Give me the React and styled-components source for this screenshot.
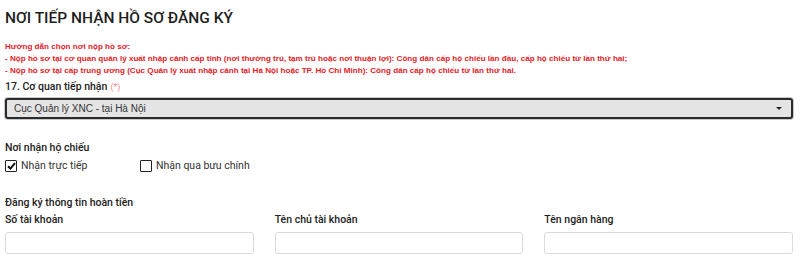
import React from 'react';
import styled, { createGlobalStyle } from 'styled-components';

const GlobalStyle = createGlobalStyle`
  body {
    margin: 0;
    background: #fff;
    font-family: Roboto, "Liberation Sans", Arial, sans-serif;
    color: #222;
  }
`;

const Page = styled.div`
  width: 788px;
  padding: 9px 5px 0 5px;
  display: flex;
  flex-direction: column;
`;

const Title = styled.h2`
  margin: 0;
  font-size: 15.5px;
  font-weight: 500;
  line-height: 18px;
  color: #1e1e1e;
`;

const Guide = styled.div`
  margin-top: 14px;
  font-family: "Liberation Sans", Arial, sans-serif;
  font-size: 8.1px;
  font-weight: 700;
  line-height: 12px;
  color: #e3201f;
`;

const FieldLabel = styled.div`
  margin-top: ${p => p.$top || 0}px;
  font-size: 10.5px;
  font-weight: 500;
  line-height: 13px;
  color: #222;
`;

const Required = styled.span`
  color: #f08a8a;
  font-weight: 400;
  font-size: 9px;
  margin-left: 3px;
`;

const Select = styled.div`
  margin-top: 4px;
  height: 17px;
  border: 2px solid #2b2b2b;
  border-radius: 3px;
  background: #e4e4e4;
  box-shadow: 0 0 0 1px #c8c8c8;
  display: flex;
  align-items: center;
  justify-content: space-between;
  padding: 0 9px 0 7px;
  font-family: "Liberation Sans", Arial, sans-serif;
  font-size: 10px;
  color: #333;
`;

const Caret = styled.span`
  width: 0;
  height: 0;
  border-left: 3px solid transparent;
  border-right: 3px solid transparent;
  border-top: 3px solid #222;
`;

const CheckRow = styled.div`
  margin-top: 5px;
  display: flex;
  align-items: center;
`;

const CheckItem = styled.label`
  width: ${p => p.$w}px;
  display: flex;
  align-items: center;
  gap: 4px;
  font-size: 10.5px;
  color: #333;
`;

const Box = styled.span`
  width: 10px;
  height: 10px;
  border: 1px solid #222;
  border-radius: 1px;
  display: flex;
  align-items: center;
  justify-content: center;
  background: #fff;
`;

const Grid = styled.div`
  margin-top: 4px;
  display: grid;
  grid-template-columns: repeat(3, 1fr);
  column-gap: 21px;
`;

const Field = styled.div`
  display: flex;
  flex-direction: column;
  gap: 6px;
`;

const Input = styled.div`
  height: 20px;
  border: 1px solid #dadada;
  border-radius: 3px;
  background: #fff;
`;

const Check = () => (
  <svg width="9" height="8" viewBox="0 0 9 8">
    <path d="M1 4.2 L3.4 6.6 L8 1.2" stroke="#111" strokeWidth="2" fill="none" />
  </svg>
);

export default function App() {
  return (
    <>
      <GlobalStyle />
      <Page>
        <Title>NƠI TIẾP NHẬN HỒ SƠ ĐĂNG KÝ</Title>
        <Guide>
          Hướng dẫn chọn nơi nộp hồ sơ:
          <br />- Nộp hồ sơ tại cơ quan quản lý xuất nhập cảnh cấp tỉnh (nơi thường trú, tạm trú hoặc nơi thuận lợi): Công dân cấp hộ chiếu lần đầu, cấp hộ chiếu từ lần thứ hai;
          <br />- Nộp hồ sơ tại cấp trung ương (Cục Quản lý xuất nhập cảnh tại Hà Nội hoặc TP. Hồ Chí Minh): Công dân cấp hộ chiếu từ lần thứ hai.
        </Guide>
        <FieldLabel $top={3}>
          17. Cơ quan tiếp nhận<Required>(*)</Required>
        </FieldLabel>
        <Select>
          <span>Cục Quản lý XNC - tại Hà Nội</span>
          <Caret />
        </Select>
        <FieldLabel $top={22}>Nơi nhận hộ chiếu</FieldLabel>
        <CheckRow>
          <CheckItem $w={135}>
            <Box>
              <Check />
            </Box>
            Nhận trực tiếp
          </CheckItem>
          <CheckItem $w={200}>
            <Box />
            Nhận qua bưu chính
          </CheckItem>
        </CheckRow>
        <FieldLabel $top={24}>Đăng ký thông tin hoàn tiền</FieldLabel>
        <Grid>
          {['Số tài khoản', 'Tên chủ tài khoản', 'Tên ngân hàng'].map(t => (
            <Field key={t}>
              <FieldLabel>{t}</FieldLabel>
              <Input />
            </Field>
          ))}
        </Grid>
      </Page>
    </>
  );
}
